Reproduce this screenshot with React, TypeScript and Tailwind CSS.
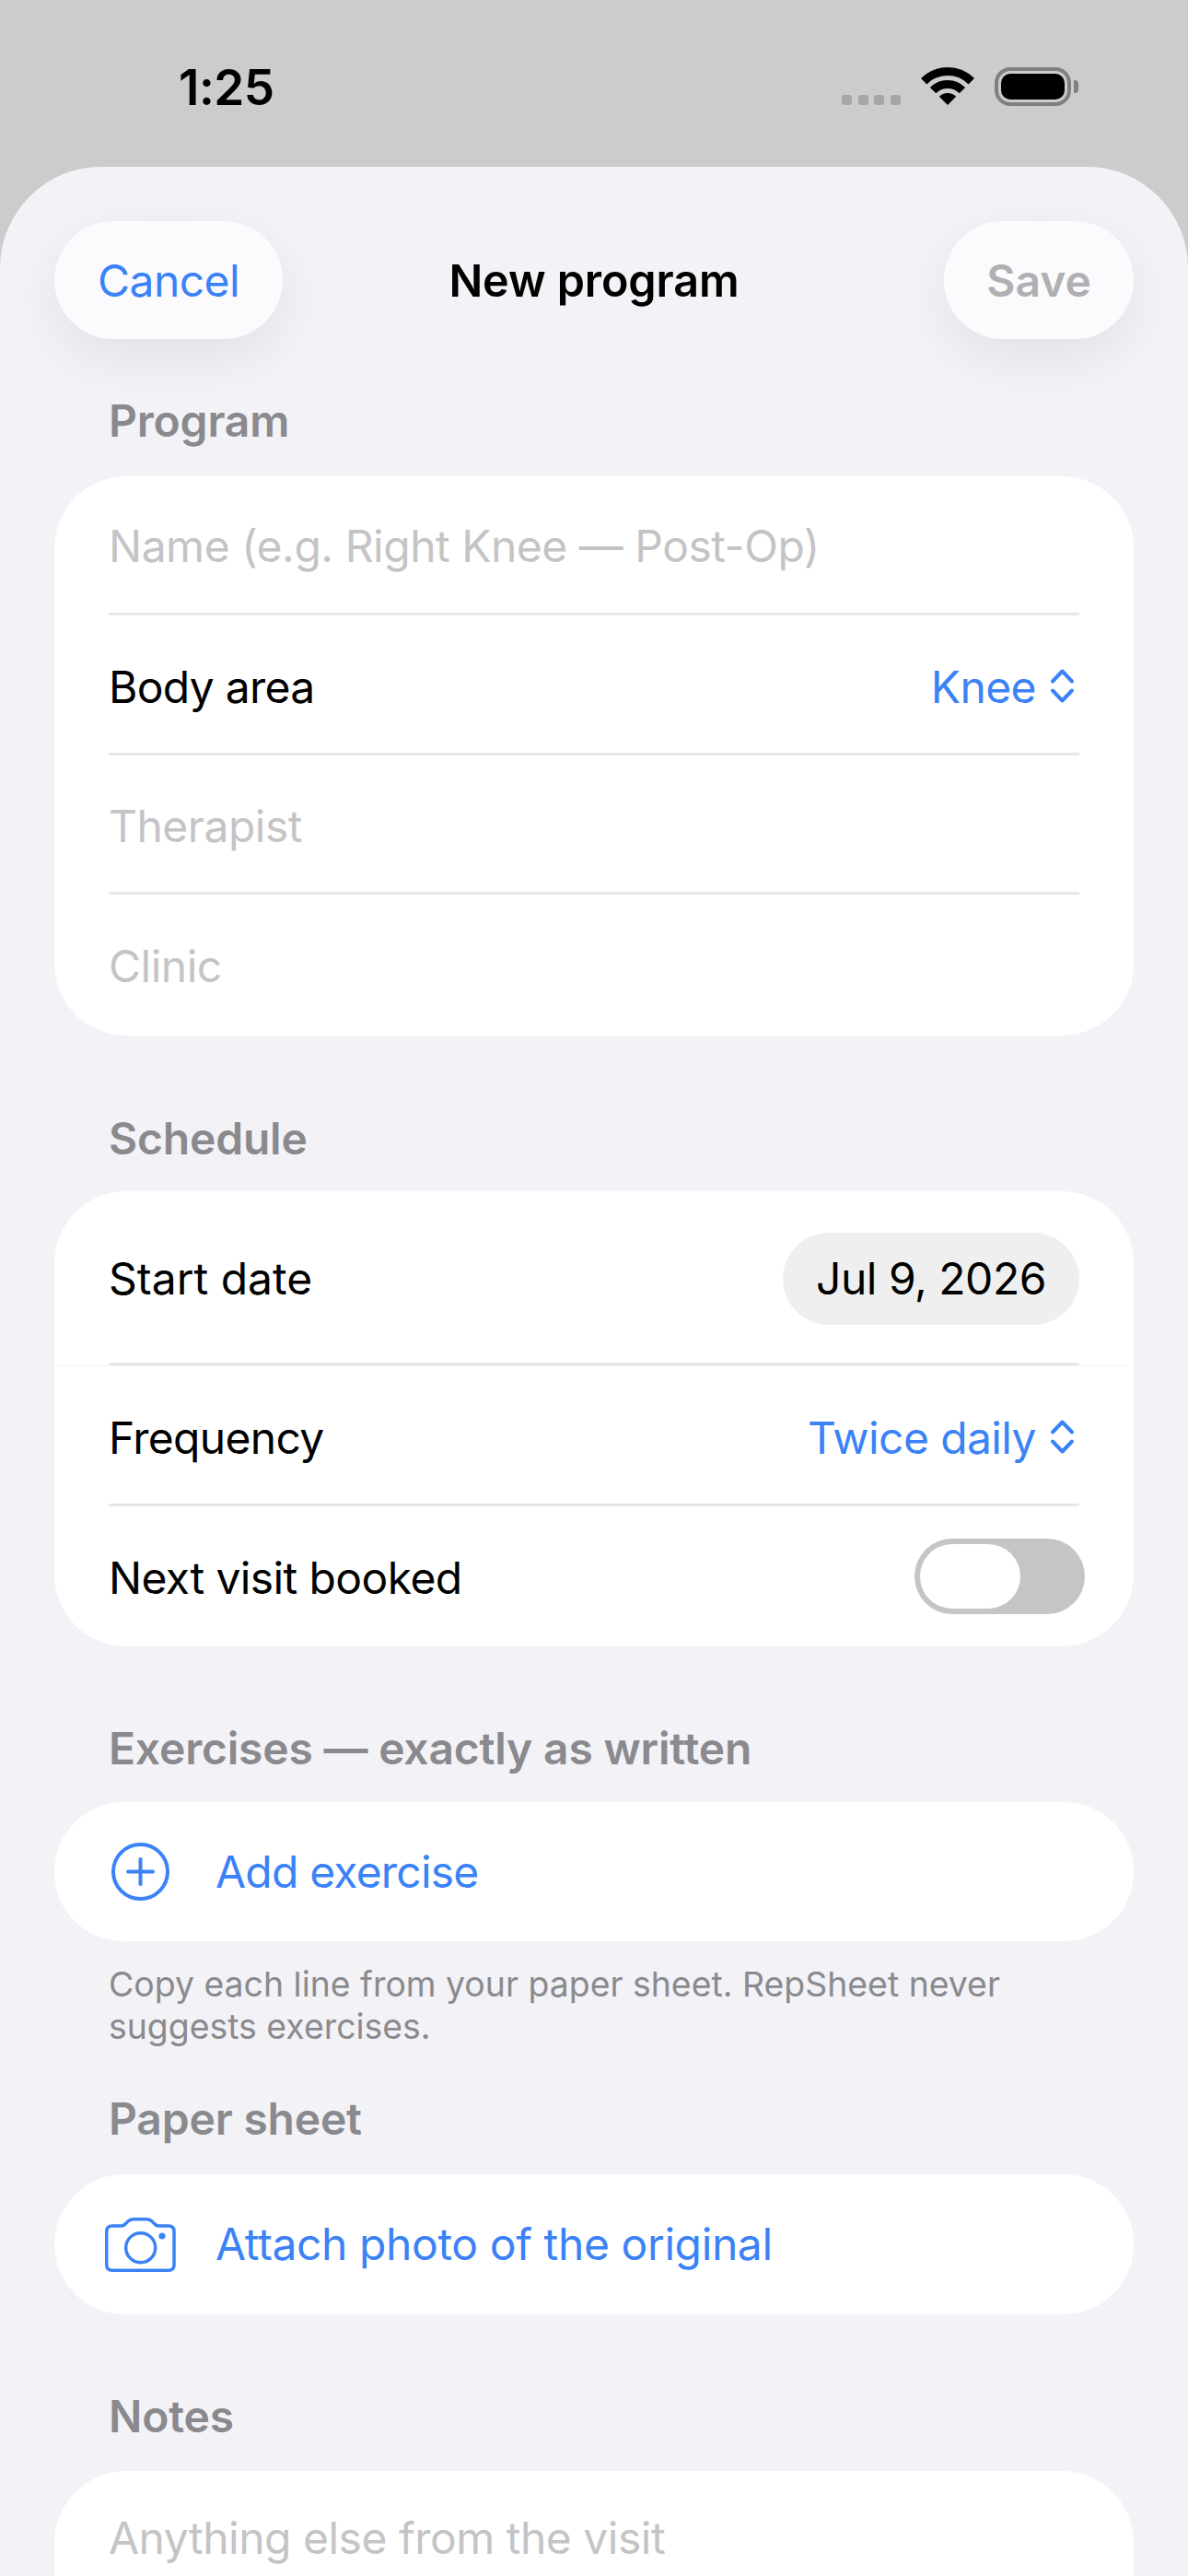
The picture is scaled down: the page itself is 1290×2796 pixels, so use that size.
const font = { fontFamily: 'Inter, "Liberation Sans", sans-serif' };

function Chevrons() {
  return (
    <svg width="29" height="41" viewBox="0 0 29 41" fill="none" stroke="#3b82f6" strokeWidth="4" strokeLinecap="round" strokeLinejoin="round" className="mr-[4px] -mt-[3px]">
      <path d="M4 15.5 L14.5 4.5 L25 15.5" />
      <path d="M4 25.5 L14.5 36.5 L25 25.5" />
    </svg>
  );
}

function Wifi() {
  return (
    <svg width="58" height="41" viewBox="0 0 58 41" fill="#000">
      <path d="M3.2 15.2 A36.5 36.5 0 0 1 54.8 15.2" fill="none" stroke="#000" strokeWidth="9" />
      <path d="M13.1 25.1 A22.5 22.5 0 0 1 44.9 25.1" fill="none" stroke="#000" strokeWidth="9" />
      <path d="M29 41 L19.8 31.8 A13 13 0 0 1 38.2 31.8 Z" />
    </svg>
  );
}

function CameraIcon() {
  return (
    <svg width="77" height="59" viewBox="0 0 77 59" fill="none" stroke="#3b82f6" strokeWidth="3.5" strokeLinejoin="round" className="shrink-0">
      <path d="M8 9 H18 C21 9 22 7.5 24 5 C26 2.5 28 1.75 31 1.75 H45 C48 1.75 50 2.5 52 5 C54 7.5 55 9 58 9 H69 C73 9 75 11 75 15 V51 C75 55 73 57.25 69 57.25 H8 C4 57.25 1.75 55 1.75 51 V15 C1.75 11 4 9 8 9 Z" />
      <circle cx="38.7" cy="32.7" r="16" />
      <circle cx="62" cy="20" r="3.6" fill="#3b82f6" stroke="none" />
    </svg>
  );
}

function SectionLabel({ children, className }: { children: string; className: string }) {
  return <div className={`px-[118px] h-[54px] leading-[54px] text-[48px] font-semibold tracking-[-0.2px] text-[#8a8a8e] ${className}`}>{children}</div>;
}

function Row({ children, height, divider = true }: { children: React.ReactNode; height: string; divider?: boolean }) {
  return (
    <div className={`mx-[59px] flex items-center justify-between ${height} ${divider ? 'pt-[3px] border-b-[3px] border-[#e7e7e9]' : ''}`}>
      {children}
    </div>
  );
}

function TextRow({ placeholder, divider = true, height, nudge = 'mt-[3px]' }: { placeholder: string; divider?: boolean; height: string; nudge?: string }) {
  return (
    <Row height={height} divider={divider}>
      <input
        placeholder={placeholder}
        className={`w-full bg-transparent text-[48px] tracking-[-0.5px] text-black outline-none placeholder:text-[#c4c4c6] ${nudge}`}
        style={font}
      />
    </Row>
  );
}

export default function App() {
  return (
    <div className="w-[1290px] h-[2796px] overflow-hidden bg-[#cccccc] flex flex-col" style={font}>
      {/* status bar */}
      <div className="h-[181px] shrink-0 flex items-start justify-between pl-[194px] pr-[119px] pt-[65px]">
        <div className="text-[53px] leading-[60px] font-semibold tracking-[-0.5px] text-black">1:25</div>
        <div className="flex items-start pt-[8px]">
          <div className="flex gap-[6.6px] mt-[30px] mr-[22px]">
            <div className="w-[11px] h-[11px] rounded-[3px] bg-[#a6a6a6]" />
            <div className="w-[11px] h-[11px] rounded-[3px] bg-[#a6a6a6]" />
            <div className="w-[11px] h-[11px] rounded-[3px] bg-[#a6a6a6]" />
            <div className="w-[11px] h-[11px] rounded-[3px] bg-[#a6a6a6]" />
          </div>
          <Wifi />
          <div className="ml-[22px] w-[83px] h-[42px] rounded-[17px] border-[4px] border-[#808080] p-[3px]">
            <div className="w-full h-full rounded-[10px] bg-black" />
          </div>
          <div className="ml-[3px] mt-[14px] w-[5px] h-[14px] rounded-r-[4px] bg-[#808080]" />
        </div>
      </div>

      {/* sheet */}
      <div className="flex-1 bg-[#f2f2f7] rounded-t-[110px]">
        <div className="grid grid-cols-[1fr_auto_1fr] items-center px-[59px] pt-[59px]">
          <div>
            <button className="w-[248px] h-[128px] pt-[2px] rounded-[64px] bg-[#fbfbfe] text-[48px] tracking-[-0.6px] text-[#3b82f6] shadow-[0_20px_60px_rgba(0,0,0,0.07)]">Cancel</button>
          </div>
          <div className="pt-[2px] text-[48.5px] font-semibold tracking-[-0.1px] text-black">New program</div>
          <div className="flex justify-end">
            <button className="w-[206px] h-[128px] pt-[2px] rounded-[64px] bg-[#fbfbfe] text-[48px] font-semibold text-[#b0b0b2] shadow-[0_20px_60px_rgba(0,0,0,0.07)]">Save</button>
          </div>
        </div>

        <SectionLabel className="mt-[62px] mb-[33px]">Program</SectionLabel>
        <div className="mx-[59px] rounded-[78px] bg-white">
          <TextRow placeholder="Name (e.g. Right Knee — Post-Op)" height="h-[151px]" nudge="mt-0" />
          <Row height="h-[152px]">
            <span className="mt-[3px] text-[48px] tracking-[-0.7px] text-black">Body area</span>
            <span className="mt-[3px] flex items-center gap-[14px] text-[48px] tracking-[-0.6px] text-[#3b82f6]">Knee <Chevrons /></span>
          </Row>
          <TextRow placeholder="Therapist" height="h-[151px]" />
          <TextRow placeholder="Clinic" divider={false} height="h-[153px]" />
        </div>

        <SectionLabel className="mt-[85px] mb-[30px]">Schedule</SectionLabel>
        <div className="mx-[59px] rounded-[78px] bg-white">
          <div className="border-b border-[#f5f5f6]">
            <Row height="h-[189px]">
              <span className="text-[48px] tracking-[0px] text-black">Start date</span>
              <span className="h-[100px] w-[322px] rounded-[50px] bg-[#efeff0] flex items-center justify-center text-[48px] tracking-[-0.5px] text-black">Jul 9, 2026</span>
            </Row>
          </div>
          <Row height="h-[152px]">
            <span className="mt-[3px] text-[48px] tracking-[-0.7px] text-black">Frequency</span>
            <span className="mt-[3px] flex items-center gap-[14px] text-[48px] tracking-[-0.6px] text-[#3b82f6]">Twice daily <Chevrons /></span>
          </Row>
          <Row height="h-[152px]" divider={false}>
            <span className="mt-[3px] text-[48px] tracking-[-0.6px] text-black">Next visit booked</span>
            <span className="-mr-[6px] w-[185px] h-[82px] rounded-[41px] bg-[#c5c5c7] p-[6px]">
              <span className="block w-[109px] h-[70px] rounded-[35px] bg-white" />
            </span>
          </Row>
        </div>

        <SectionLabel className="mt-[84px] mb-[31px]">Exercises — exactly as written</SectionLabel>
        <div className="mx-[59px] h-[151px] rounded-[75px] bg-white flex items-center pl-[62px] gap-[50px]">
          <svg width="63" height="63" viewBox="0 0 63 63" fill="none" stroke="#3b82f6" strokeWidth="4" strokeLinecap="round" className="shrink-0">
            <circle cx="31.5" cy="31.5" r="29.5" />
            <path d="M31.5 18 V45 M18 31.5 H45" />
          </svg>
          <span className="text-[48px] tracking-[-0.8px] text-[#3b82f6]">Add exercise</span>
        </div>
        <div className="mt-[24px] px-[118px] text-[37.4px] leading-[46px] text-[#8a8a8e]">
          Copy each line from your paper sheet. RepSheet never<br />suggests exercises.
        </div>

        <SectionLabel className="mt-[50px] mb-[33px]">Paper sheet</SectionLabel>
        <div className="mx-[59px] h-[152px] rounded-[76px] bg-white flex items-center pl-[55px] gap-[43px]">
          <CameraIcon />
          <span className="text-[48px] tracking-[-0.4px] text-[#3b82f6]">Attach photo of the original</span>
        </div>

        <SectionLabel className="mt-[84px] mb-[32px]">Notes</SectionLabel>
        <div className="mx-[59px] h-[400px] rounded-[78px] bg-white pl-[59px] pt-[37px]">
          <span className="text-[48px] tracking-[-0.5px] text-[#c4c4c6]">Anything else from the visit</span>
        </div>
      </div>
    </div>
  );
}
